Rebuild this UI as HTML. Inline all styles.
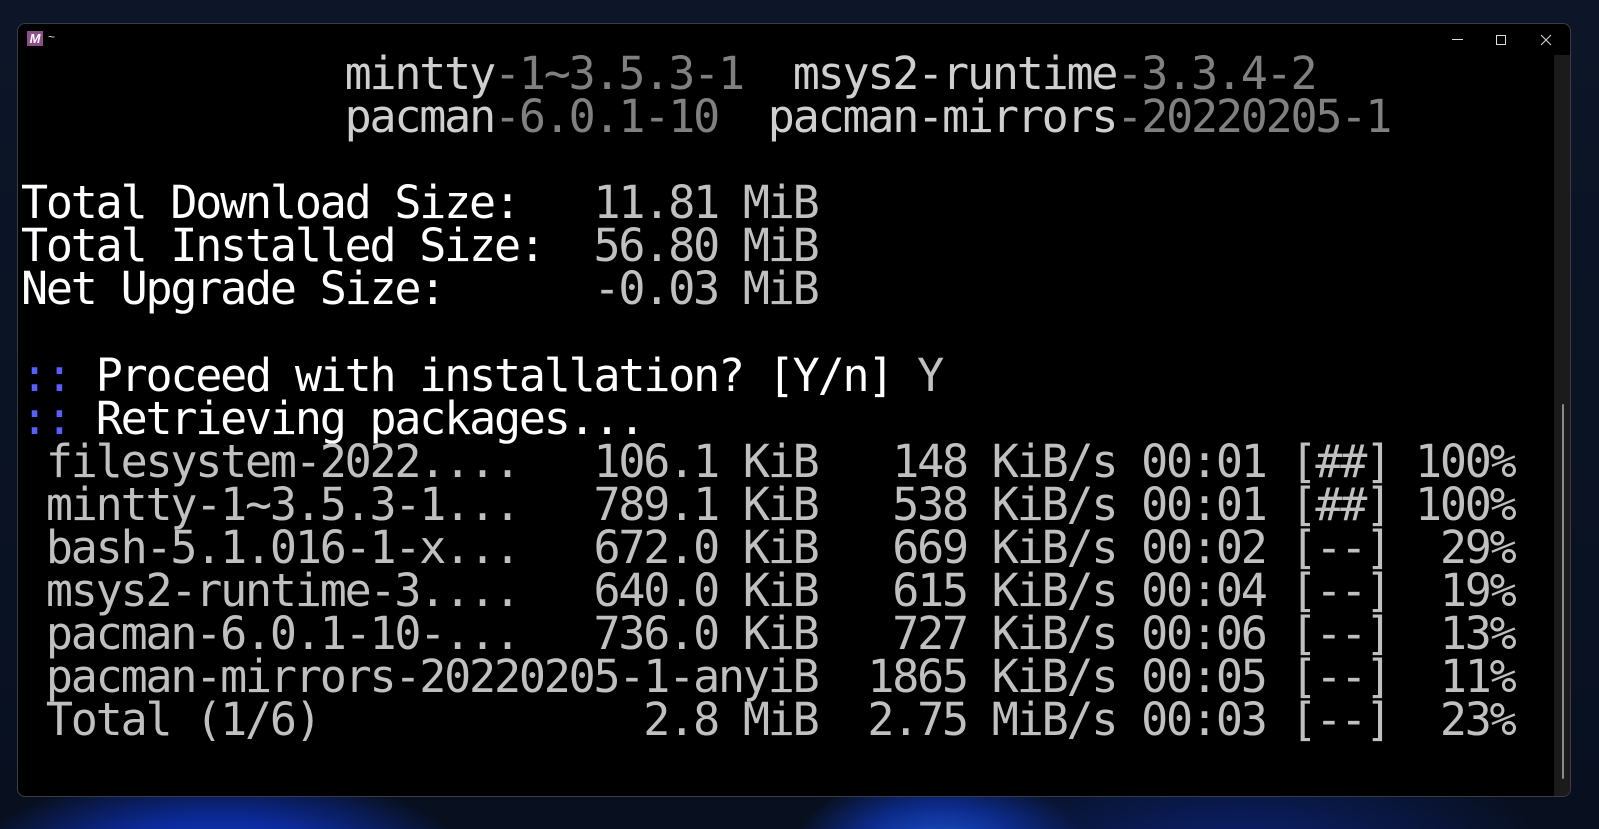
<!DOCTYPE html>
<html><head><meta charset="utf-8"><style>
html,body{margin:0;padding:0;width:1599px;height:829px;overflow:hidden;background:#0a1322;}
.bg{position:absolute;inset:0;background:radial-gradient(ellipse 260px 110px at 220px 880px,#1a4ae0 0%,#0c2a9a 55%,rgba(10,19,34,0) 100%),radial-gradient(ellipse 150px 90px at 940px 860px,#2060e0 0%,#0d2a8a 60%,rgba(10,19,34,0) 100%),radial-gradient(ellipse 300px 100px at 1240px 850px,#0b2070 0%,rgba(10,19,34,0) 100%),linear-gradient(#0c1628,#081020);}
.win{position:absolute;left:17px;top:23px;width:1552px;height:772px;background:#000;border:1px solid #3a3d44;border-radius:8px;overflow:hidden;}
.icon{position:absolute;left:9px;top:7px;width:16px;height:15px;background:#8e4e8c;color:#fff;font:italic bold 13px "Liberation Sans",sans-serif;line-height:15px;text-align:center;}
.tilde{position:absolute;left:30px;top:6px;color:#ddd;font:12px "Liberation Sans",sans-serif;}
.sb{position:absolute;left:1536px;top:31px;width:17px;height:741px;background:#1b1b1b;}
.thumb{position:absolute;left:1544px;top:380px;width:2px;height:375px;background:#8a8a8a;border-radius:1px;}
pre{position:absolute;left:3px;top:28px;margin:0;font-family:"DejaVu Sans Mono",monospace;font-size:45px;letter-spacing:-2.2px;line-height:43.1px;color:#c0c0c0;}
.w{color:#fff}.d{color:#808080}.n{color:#cfcfcf}.b{color:#5560ff}
</style></head><body>
<div class="bg"></div>
<div class="win">
<div class="icon">M</div><div class="tilde">~</div>
<svg style="position:absolute;left:1429px;top:8px" width="120" height="16">
<line x1="5" y1="7.5" x2="16" y2="7.5" stroke="#ddd" stroke-width="1"/>
<rect x="49.5" y="3.5" width="9" height="9" fill="none" stroke="#ddd" stroke-width="1"/>
<path d="M94 3 L104 13 M104 3 L94 13" stroke="#ddd" stroke-width="1"/>
</svg>
<div class="sb"></div><div class="thumb"></div>
<pre>             <span class="n">mintty</span><span class="d">-1~3.5.3-1</span>  <span class="n">msys2-runtime</span><span class="d">-3.3.4-2</span>
             <span class="n">pacman</span><span class="d">-6.0.1-10</span>  <span class="n">pacman-mirrors</span><span class="d">-20220205-1</span>

<span class="w">Total Download Size:</span>   11.81 MiB
<span class="w">Total Installed Size:</span>  56.80 MiB
<span class="w">Net Upgrade Size:</span>      -0.03 MiB

<span class="b">::</span> <span class="w">Proceed with installation? [Y/n]</span> Y
<span class="b">::</span> <span class="w">Retrieving packages...</span>
 filesystem-2022....   106.1 KiB   148 KiB/s 00:01 [##] 100%
 mintty-1~3.5.3-1...   789.1 KiB   538 KiB/s 00:01 [##] 100%
 bash-5.1.016-1-x...   672.0 KiB   669 KiB/s 00:02 [--]  29%
 msys2-runtime-3....   640.0 KiB   615 KiB/s 00:04 [--]  19%
 pacman-6.0.1-10-...   736.0 KiB   727 KiB/s 00:06 [--]  13%
 pacman-mirrors-20220205-1-anyiB  1865 KiB/s 00:05 [--]  11%
 Total (1/6)             2.8 MiB  2.75 MiB/s 00:03 [--]  23%</pre>
</div>
</body></html>
